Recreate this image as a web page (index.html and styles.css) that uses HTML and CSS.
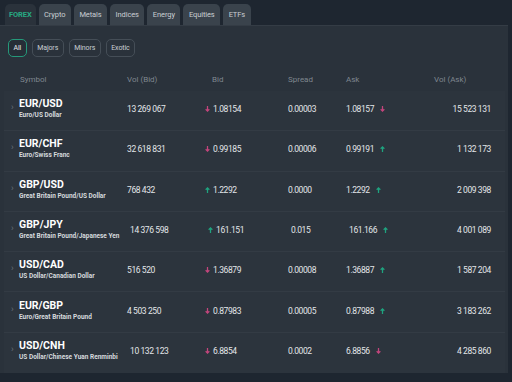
FILE: index.html
```html
<!DOCTYPE html>
<html lang="en">
<head>
    <meta charset="UTF-8">
    <title>FX Rates</title>
    <link rel="stylesheet" href="styles.css">
</head>
<body>
    <!-- market tabs -->
    <div class="tabs">
        <div class="tab active">FOREX</div>
        <div class="tab">Crypto</div>
        <div class="tab">Metals</div>
        <div class="tab">Indices</div>
        <div class="tab">Energy</div>
        <div class="tab">Equities</div>
        <div class="tab">ETFs</div>
    </div>

    <div class="panel">
        <div class="filters">
            <div class="chip active">All</div>
            <div class="chip">Majors</div>
            <div class="chip">Minors</div>
            <div class="chip">Exotic</div>
        </div>

        <div class="table">
            <div class="thead">
                <div></div>
                <div>Symbol</div>
                <div>Vol (Bid)</div>
                <div class="th-bid">Bid</div>
                <div>Spread</div>
                <div>Ask</div>
                <div>Vol (Ask)</div>
            </div>

            <div class="row">
                <div class="chev">›</div>
                <div class="sym"><b>EUR/USD</b><span>Euro/US Dollar</span></div>
                <div>13 269 067</div>
                <div class="bid"><svg class="arr down" viewBox="0 0 6 7"><path d="M3 0V6M0.8 3.8L3 6L5.2 3.8"/></svg>1.08154</div>
                <div>0.00003</div>
                <div class="ask">1.08157<svg class="arr down" viewBox="0 0 6 7"><path d="M3 0V6M0.8 3.8L3 6L5.2 3.8"/></svg></div>
                <div class="vol">15 523 131</div>
            </div>
            <div class="row">
                <div class="chev">›</div>
                <div class="sym"><b>EUR/CHF</b><span>Euro/Swiss Franc</span></div>
                <div>32 618 831</div>
                <div class="bid"><svg class="arr down" viewBox="0 0 6 7"><path d="M3 0V6M0.8 3.8L3 6L5.2 3.8"/></svg>0.99185</div>
                <div>0.00006</div>
                <div class="ask">0.99191<svg class="arr up" viewBox="0 0 6 7"><path d="M3 7V1M0.8 3.2L3 1L5.2 3.2"/></svg></div>
                <div class="vol">1 132 173</div>
            </div>
            <div class="row">
                <div class="chev">›</div>
                <div class="sym"><b>GBP/USD</b><span>Great Britain Pound/US Dollar</span></div>
                <div>768 432</div>
                <div class="bid"><svg class="arr up" viewBox="0 0 6 7"><path d="M3 7V1M0.8 3.2L3 1L5.2 3.2"/></svg>1.2292</div>
                <div>0.0000</div>
                <div class="ask">1.2292<svg class="arr up" viewBox="0 0 6 7"><path d="M3 7V1M0.8 3.2L3 1L5.2 3.2"/></svg></div>
                <div class="vol">2 009 398</div>
            </div>
            <div class="row">
                <div class="chev">›</div>
                <div class="sym"><b>GBP/JPY</b><span>Great Britain Pound/Japanese Yen</span></div>
                <div class="shift">14 376 598</div>
                <div class="bid shift"><svg class="arr up" viewBox="0 0 6 7"><path d="M3 7V1M0.8 3.2L3 1L5.2 3.2"/></svg>161.151</div>
                <div class="shift">0.015</div>
                <div class="ask shift">161.166<svg class="arr up" viewBox="0 0 6 7"><path d="M3 7V1M0.8 3.2L3 1L5.2 3.2"/></svg></div>
                <div class="vol">4 001 089</div>
            </div>
            <div class="row">
                <div class="chev">›</div>
                <div class="sym"><b>USD/CAD</b><span>US Dollar/Canadian Dollar</span></div>
                <div>516 520</div>
                <div class="bid"><svg class="arr down" viewBox="0 0 6 7"><path d="M3 0V6M0.8 3.8L3 6L5.2 3.8"/></svg>1.36879</div>
                <div>0.00008</div>
                <div class="ask">1.36887<svg class="arr up" viewBox="0 0 6 7"><path d="M3 7V1M0.8 3.2L3 1L5.2 3.2"/></svg></div>
                <div class="vol">1 587 204</div>
            </div>
            <div class="row">
                <div class="chev">›</div>
                <div class="sym"><b>EUR/GBP</b><span>Euro/Great Britain Pound</span></div>
                <div>4 503 250</div>
                <div class="bid"><svg class="arr down" viewBox="0 0 6 7"><path d="M3 0V6M0.8 3.8L3 6L5.2 3.8"/></svg>0.87983</div>
                <div>0.00005</div>
                <div class="ask">0.87988<svg class="arr up" viewBox="0 0 6 7"><path d="M3 7V1M0.8 3.2L3 1L5.2 3.2"/></svg></div>
                <div class="vol">3 183 262</div>
            </div>
            <div class="row">
                <div class="chev">›</div>
                <div class="sym"><b>USD/CNH</b><span>US Dollar/Chinese Yuan Renminbi</span></div>
                <div class="shift">10 132 123</div>
                <div class="bid"><svg class="arr down" viewBox="0 0 6 7"><path d="M3 0V6M0.8 3.8L3 6L5.2 3.8"/></svg>6.8854</div>
                <div>0.0002</div>
                <div class="ask">6.8856<svg class="arr down" viewBox="0 0 6 7"><path d="M3 0V6M0.8 3.8L3 6L5.2 3.8"/></svg></div>
                <div class="vol">4 285 860</div>
            </div>
        </div>
    </div>
</body>
</html>
```

FILE: styles.css
```css
body {
    margin: 0;
    background: #1e2630;
    font-family: Roboto, "Liberation Sans", sans-serif;
    color: #e6e9ec;
    overflow: hidden;
}

.tabs {
    display: flex;
    gap: 3px;
    height: 21px;
    padding: 4px 0 0 5px;
}

.tab {
    display: flex;
    align-items: center;
    padding: 0 5.5px;
    background: #3a434c;
    border-radius: 5px 5px 0 0;
    font-size: 7.5px;
    letter-spacing: -0.1px;
    color: #c9ced3;
}

.tab.active {
    background: #2a323b;
    color: #27a983;
    font-weight: bold;
    padding: 0 4px;
}

.panel {
    width: 508px;
    height: 348px;
    background: #2a323b;
    border-top: 1px solid #343c45;
    box-sizing: border-box;
    padding: 13px 3px 0 4px;
}

.filters {
    display: flex;
    gap: 5px;
    padding-left: 4px;
    margin-bottom: 10px;
}

.chip {
    height: 18px;
    box-sizing: border-box;
    display: flex;
    align-items: center;
    padding: 0 4.5px;
    border: 1px solid #454e57;
    border-radius: 5px;
    font-size: 7px;
    letter-spacing: -0.1px;
    color: #c9ced3;
}

.chip.active {
    border-color: #25997a;
    color: #e6e9ec;
    background: #262e37;
}

.table {
    background: #2c343d;
}

.thead,
.row {
    display: grid;
    grid-template-columns: 8px 108px 78px 83px 58px 88px 57px;
    padding-left: 7px;
    align-items: center;
}

.thead {
    height: 24px;
    font-size: 8px;
    color: #7f878f;
    background: #2a323b;
}

.thead > div:nth-child(2) {
    padding-left: 1px;
}

.th-bid {
    padding-left: 7px;
}

.row {
    height: 40.3px;
    box-sizing: border-box;
    padding-bottom: 3px;
    border-bottom: 1px solid #333b44;
    font-size: 8.5px;
    letter-spacing: -0.4px;
    color: #e3e6e9;
}

.row:last-child {
    border-bottom: none;
}

.chev {
    color: #6a727a;
    font-size: 9px;
    margin-top: -4px;
}

.sym {
    display: flex;
    flex-direction: column;
    letter-spacing: 0;
}

.sym b {
    font-size: 10.5px;
    line-height: 12px;
    color: #ffffff;
}

.sym span {
    font-size: 6.5px;
    font-weight: bold;
    line-height: 10px;
    color: #d6dadd;
}

.bid,
.ask {
    display: flex;
    align-items: center;
}

.bid .arr {
    margin-right: 3px;
}

.ask .arr {
    margin-left: 6px;
}

.arr {
    width: 5px;
    height: 6px;
    fill: none;
    stroke-width: 1.5;
}

.arr.down {
    stroke: #c2457c;
}

.arr.up {
    stroke: #1fa37f;
}

.shift {
    padding-left: 3px;
}

.vol {
    text-align: right;
}
```
